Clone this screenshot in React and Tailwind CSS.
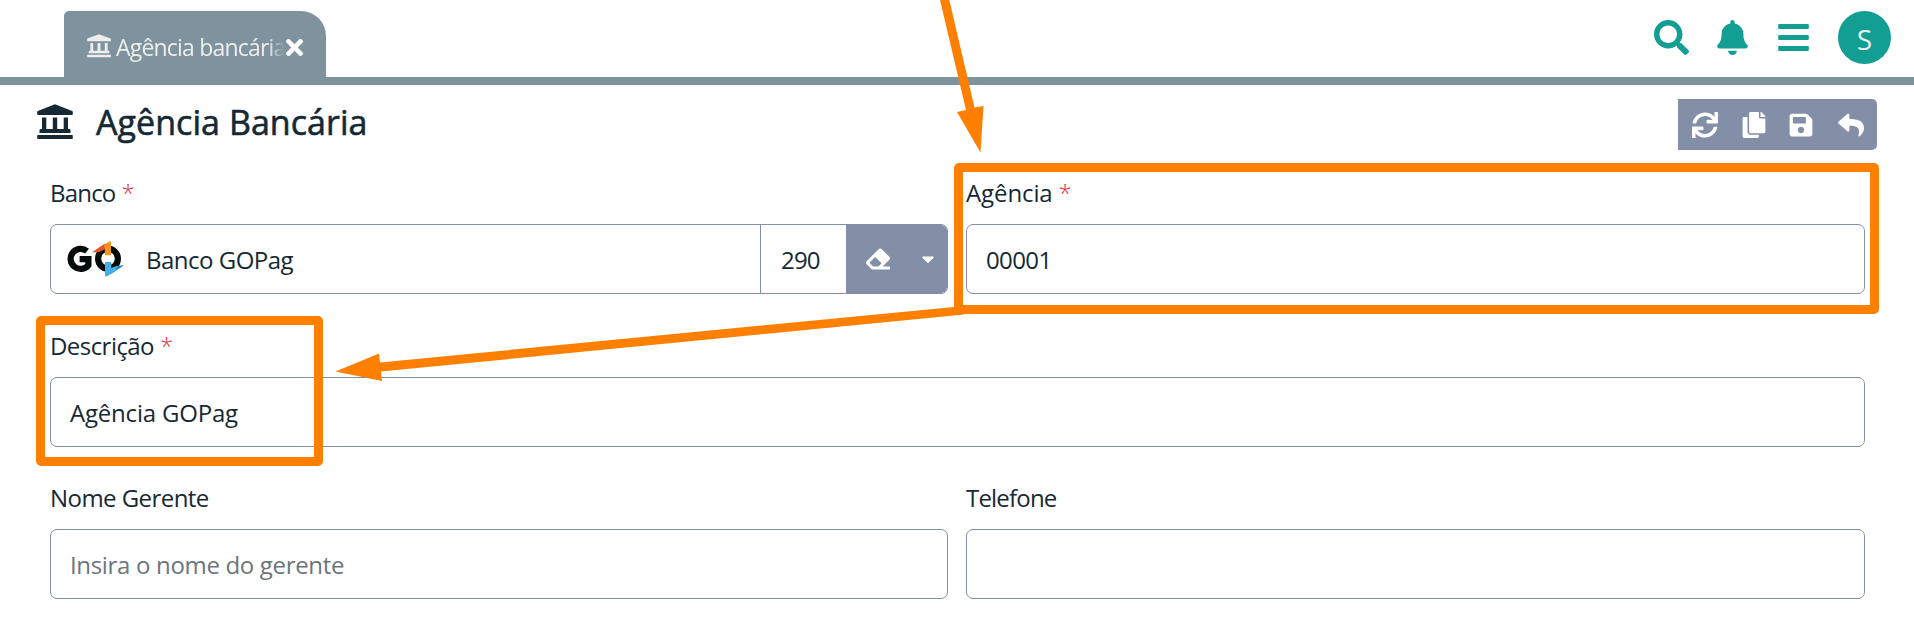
import React from "react";
import {
  FaTimes, FaSearch, FaBell, FaBars, FaSync, FaCopy, FaSave, FaReply, FaEraser, FaCaretDown,
} from "react-icons/fa";

function Logo() {
  return (
    <svg width="60" height="36" viewBox="0 0 60 36" className="shrink-0">
      <path d="M22 10.2A10 10 0 1 0 23.4 24.2V18.2H14.6" fill="none" stroke="#050a0b" strokeWidth="6.2" />
      <ellipse cx="43" cy="17.7" rx="9.9" ry="10" fill="none" stroke="#050a0b" strokeWidth="6.2" />
      <path d="M40 13.500h6.200v8.500h-6.200z" fill="#fff" />
      <path d="M27 11.3 40 2.6V8l-6 3.3Z" fill="#e8502c" />
      <path d="M39 3.6 45 .3Q46 0 46 1V14.3H39.800V8Z" fill="#f7941e" />
      <path d="M59 24.3 46 33v-5.5l6-2.7Z" fill="#2182a8" />
      <path d="M40 21h6.2v6L53 24.8 50 30.5 42 35.2Q40 36 40 34.4Z" fill="#41b0e6" />
    </svg>
  );
}

function BankIcon({ className }) {
  return (
    <svg viewBox="0 0 36 36" fill="currentColor" className={className}>
      <path d="M18 .3 35.2 6.9Q35.8 7.2 35.8 8v2Q35.8 11 34.8 11H1.2Q.2 11 .2 10V8Q.2 7.2 .8 6.9Z" />
      <path d="M5 13.5h4.3v11.5h6.5V13.5h4.4v11.5h6.5V13.5H31v11.5h1.2q1.3 0 1.3 1.3V29h-31v-2.7Q2.5 25 3.8 25H5Z" />
      <path d="M1 31h34q.8 0 .8.8v2.4q0 .8-.8.8H1q-.8 0-.8-.8v-2.4Q.2 31 1 31Z" />
    </svg>
  );
}

function Field({ label, required, labelClass = "pt-[9px] tracking-[-0.55px]", children }) {
  return (
    <div className="flex min-w-0 flex-col">
      <div className={"h-[57px] text-[24px] leading-[33px] " + labelClass}>
        <span>{label}</span>
        {required && <span className="ml-[6px] font-light text-[#dc3545]">*</span>}
      </div>
      {children}
    </div>
  );
}

const box = "flex h-[70px] items-center rounded-[7px] border border-[#838fa6] pl-[19px] pt-[2px] text-[24px]";

export default function App() {
  return (
    <div className="relative h-[644px] w-[1914px] overflow-hidden bg-white text-[#152935] [font-family:'Open_Sans','Noto_Sans',sans-serif]">
      <header className="flex h-[85px] justify-between border-b-8 border-[#7e939d] pl-16 pr-[23px] pt-[11px]">
        <div className="flex h-[66px] w-[262px] items-center rounded-tl-[5px] rounded-tr-[25px] bg-[#7e939d] pl-[23px] pt-[5px] text-[#eee]">
          <BankIcon className="-mt-[2px] size-6 shrink-0" />
          <span className="ml-[5px] w-[169px] whitespace-nowrap pt-px text-[23px] tracking-[-0.8px] [mask-image:linear-gradient(to_right,black_90%,transparent)]">
            Agência bancária
          </span>
          <FaTimes className="-ml-[3px] mt-[2px] size-[25px] shrink-0 text-white" />
        </div>
        <div className="flex h-[53px] items-center text-[#129e93]">
          <FaSearch className="mr-[26px] size-[35px]" />
          <FaBell className="mr-[26px] size-[35px]" />
          <FaBars className="mr-[27px] size-[35px]" />
          <div className="flex size-[53px] items-center justify-center rounded-full bg-[#129e93] pt-[2px] text-[28px] text-[#eee]">S</div>
        </div>
      </header>

      <div className="flex h-[82px] items-start justify-between px-[37px] pt-[14px]">
        <div className="flex items-center">
          <BankIcon className="-mt-px size-9" />
          <h1 className="ml-[23px] text-[34px] leading-[46px] tracking-[0.05px] [-webkit-text-stroke:0.6px_#152935]">Agência Bancária</h1>
        </div>
        <div className="flex h-[51px] w-[199px] items-center rounded-r-[5px] bg-[#838fa6] pl-[14px] text-white">
          <FaSync className="size-[26px]" />
          <FaCopy className="ml-[23px] size-[26px]" />
          <FaSave className="ml-[21px] size-[26px]" />
          <FaReply className="ml-[24px] size-[26px]" />
        </div>
      </div>

      <main className="flex flex-col gap-[26px] pl-[50px] pr-[49px]">
        <div className="grid grid-cols-[898px_1fr] gap-x-[18px]">
          <Field label="Banco" required labelClass="pt-[9px] tracking-[-0.8px]">
            <div className="flex h-[70px] overflow-hidden rounded-[7px] border border-[#838fa6] text-[24px] tracking-[-0.5px]">
              <div className="flex flex-1 items-center pl-[14px]">
                <Logo />
                <span className="ml-[21px] pt-[2px]">Banco GOPag</span>
              </div>
              <div className="flex w-[86px] items-center border-l border-[#838fa6] pl-5 pt-[2px] tracking-[-0.8px]">290</div>
              <div className="flex w-[101px] items-center bg-[#838fa6] pl-5 text-white">
                <FaEraser className="size-6" />
                <FaCaretDown className="ml-[28px] size-5" />
              </div>
            </div>
          </Field>
          <Field label="Agência" required labelClass="pt-[9px] tracking-[-0.1px]">
            <div className={box + " tracking-[-0.6px]"}>00001</div>
          </Field>
        </div>
        <Field label="Descrição" required>
          <div className={box + " tracking-[-0.2px]"}>Agência GOPag</div>
        </Field>
        <div className="-mt-px grid grid-cols-[898px_1fr] gap-x-[18px]">
          <Field label="Nome Gerente">
            <div className={box + " tracking-[-0.33px] text-[#6c757d]"}>Insira o nome do gerente</div>
          </Field>
          <Field label="Telefone" labelClass="pt-[9px] tracking-[-0.8px]">
            <div className={box} />
          </Field>
        </div>
      </main>

      <div className="absolute left-[954px] top-[163px] h-[151px] w-[925px] rounded-[5px] border-[9px] border-[#ff8000]" />
      <div className="absolute left-[36px] top-[316px] h-[150px] w-[287px] rounded-[5px] border-[9px] border-[#ff8000]" />
      <svg className="absolute inset-0" width="1914" height="644" fill="#ff8000">
        <polygon points="940,0 949.3,0 974.5,107.5 983.5,106 980.5,152.5 957,112 966,110" />
        <polygon points="335.5,371.5 379,353.5 380,362.5 954,307 964,314.5 381,371.5 382,381" />
      </svg>
    </div>
  );
}
